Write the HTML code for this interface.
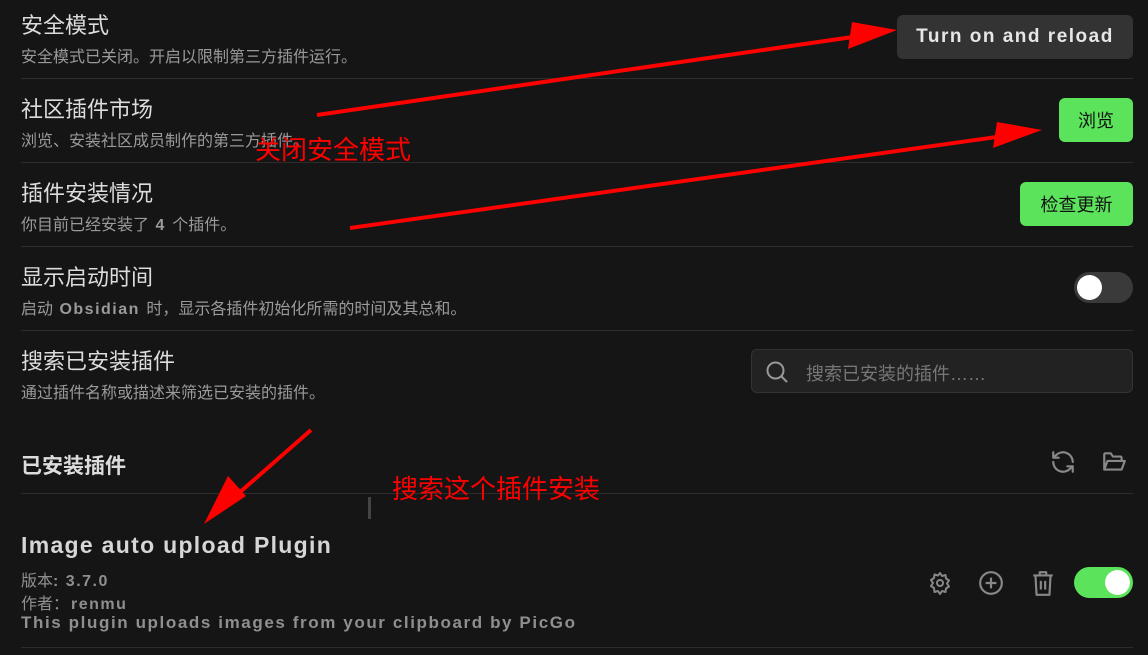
<!DOCTYPE html><html><head><meta charset="utf-8"><style>
body{margin:0;width:1148px;height:655px;background:#151515;overflow:hidden;position:relative;font-family:"Liberation Sans","Noto Sans CJK SC",sans-serif;}
.a{position:absolute;white-space:nowrap}
.t{font-size:22px;color:#dcdcdc;left:21px}
.d{font-size:16px;color:#9a9a9a;left:21px}
.d b{letter-spacing:1.5px;margin:0 2px}
.hr{position:absolute;left:21px;width:1112px;height:1px;background:#2c2c2c}
.btn{position:absolute;border-radius:6px;display:flex;align-items:center;justify-content:center}
.g{background:#5be35b;color:#111;font-size:18px}
.r{color:#f00;font-size:26px;position:absolute;white-space:nowrap}
</style></head><body>
<div class="a t" style="top:8px">安全模式</div>
<div class="a d" style="top:43px">安全模式已关闭。开启以限制第三方插件运行。</div>
<div class="hr" style="top:78px"></div>
<div class="a t" style="top:92px">社区插件市场</div>
<div class="a d" style="top:127px">浏览、安装社区成员制作的第三方插件。</div>
<div class="hr" style="top:162px"></div>
<div class="a t" style="top:176px">插件安装情况</div>
<div class="a d" style="top:211px">你目前已经安装了 <b>4</b> 个插件。</div>
<div class="hr" style="top:246px"></div>
<div class="a t" style="top:260px">显示启动时间</div>
<div class="a d" style="top:295px">启动 <b>Obsidian</b> 时，显示各插件初始化所需的时间及其总和。</div>
<div class="hr" style="top:330px"></div>
<div class="a t" style="top:344px">搜索已安装插件</div>
<div class="a d" style="top:379px">通过插件名称或描述来筛选已安装的插件。</div>
<div class="a" style="top:450px;left:21px;font-size:21px;color:#dcdcdc;font-weight:bold">已安装插件</div>
<div class="hr" style="top:493px"></div>
<div class="a" style="left:368px;top:497px;width:3px;height:22px;background:#444"></div>
<div class="a" style="top:532px;left:21px;font-size:23px;font-weight:bold;color:#d6d6d6;letter-spacing:1.3px">Image auto upload Plugin</div>
<div class="a d" style="top:567px;color:#8f8f8f">版本<b style="margin:0">: 3.7.0</b></div>
<div class="a d" style="top:590px;color:#8f8f8f">作者：<b>renmu</b></div>
<div class="a d" style="top:613px;color:#8f8f8f;font-weight:bold;font-size:17px;letter-spacing:1.6px">This plugin uploads images from your clipboard by PicGo</div>
<div class="hr" style="top:647px"></div>

<div class="btn" style="left:897px;top:15px;width:236px;height:44px;background:#333;color:#e6e6e6;font-weight:bold;font-size:19px;letter-spacing:1.5px">Turn on and reload</div>
<div class="btn g" style="left:1059px;top:98px;width:74px;height:44px">浏览</div>
<div class="btn g" style="left:1020px;top:182px;width:113px;height:44px">检查更新</div>
<div class="a" style="left:1074px;top:272px;width:59px;height:31px;border-radius:16px;background:#3a3a3a"><div style="position:absolute;left:3px;top:3px;width:25px;height:25px;border-radius:50%;background:#fff"></div></div>
<div class="a" style="left:751px;top:349px;width:380px;height:42px;border:1px solid #333;border-radius:6px;background:#222">
<svg style="position:absolute;left:13px;top:10px" width="24" height="24" viewBox="0 0 24 24" fill="none" stroke="#999" stroke-width="2"><circle cx="10.5" cy="10.5" r="8"/><path d="M16.5 16.5L22 22"/></svg>
<div class="a" style="left:54px;top:10px;font-size:18px;color:#777">搜索已安装的插件……</div></div>

<svg class="a" style="left:1050px;top:449px" width="26" height="26" viewBox="0 0 24 24" fill="none" stroke="#888" stroke-width="2" stroke-linecap="round" stroke-linejoin="round"><path d="M21 12a9 9 0 0 0-15.5-6.2L3 8M3 3v5h5M3 12a9 9 0 0 0 15.5 6.2L21 16M21 21v-5h-5"/></svg>
<svg class="a" style="left:1101px;top:449px" width="26" height="26" viewBox="0 0 24 24" fill="none" stroke="#888" stroke-width="2" stroke-linejoin="round"><path d="M3 19V5a1 1 0 0 1 1-1h5l2 3h7a1 1 0 0 1 1 1v2M3 19l3-8h16l-3 8z"/></svg>
<svg class="a" style="left:928px;top:571px" width="24" height="24" viewBox="0 0 24 24" fill="none" stroke="#888" stroke-width="2"><circle cx="12" cy="12" r="3"/><path d="M12 2l2 3 3.5-1 .5 3.5 3 2-2 3 2 3-3 2-.5 3.5-3.5-1-2 3-2-3-3.5 1L6 17l-3-2 2-3-2-3 3-2 .5-3.5 3.5 1z" stroke-linejoin="round"/></svg>
<svg class="a" style="left:978px;top:570px" width="26" height="26" viewBox="0 0 24 24" fill="none" stroke="#888" stroke-width="2"><circle cx="12" cy="12" r="10"/><path d="M12 7v10M7 12h10"/></svg>
<svg class="a" style="left:1030px;top:569px" width="26" height="28" viewBox="0 0 24 26" fill="none" stroke="#888" stroke-width="2" stroke-linejoin="round"><path d="M3 6h18M9 6V3h6v3M5 6l1 18h12l1-18M10 11v8M14 11v8"/></svg>
<div class="a" style="left:1074px;top:567px;width:59px;height:31px;border-radius:16px;background:#5be35b"><div style="position:absolute;right:3px;top:3px;width:25px;height:25px;border-radius:50%;background:#fff"></div></div>

<svg class="a" style="left:0;top:0" width="1148" height="655">
<g stroke="#f00" stroke-width="4" fill="#f00">
<line x1="317" y1="115" x2="880" y2="33"/><polygon points="897,30 848,49 852,22" stroke="none"/>
<line x1="350" y1="228" x2="1025" y2="133"/><polygon points="1042,130 993,148 997,122" stroke="none"/>
<line x1="311" y1="430" x2="215" y2="514"/><polygon points="204,524 228,476 246,496" stroke="none"/>
</g></svg>
<div class="r" style="left:255px;top:130px">关闭安全模式</div>
<div class="r" style="left:392px;top:469px">搜索这个插件安装</div>
</body></html>
